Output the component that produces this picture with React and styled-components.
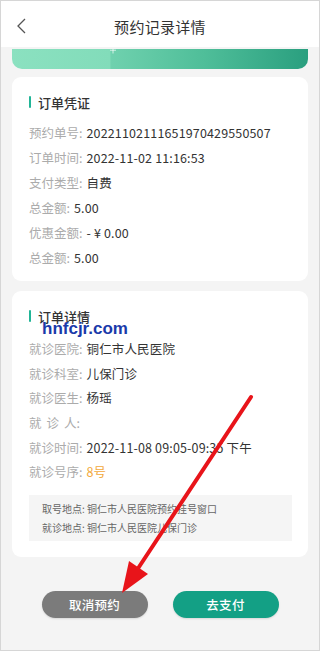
import React from "react";
import styled, { createGlobalStyle } from "styled-components";

const Global = createGlobalStyle`
  html, body { margin: 0; padding: 0; }
  body {
    font-family: "Noto Sans CJK SC", "Noto Sans", sans-serif;
    background: #f4f4f4;
  }
  * { box-sizing: border-box; }
`;

const Page = styled.div`
  position: relative;
  width: 320px;
  height: 651px;
  overflow: hidden;
  background: #f4f4f4;
  border: 1px solid #d6d6d6;
  display: flex;
  flex-direction: column;
`;

const Header = styled.header`
  height: 46px;
  flex: none;
  background: #fff;
  display: grid;
  grid-template-columns: 44px 1fr 44px;
  align-items: center;
`;

const Back = styled.button`
  border: none;
  background: none;
  padding: 0 0 0 15px;
  height: 46px;
  display: flex;
  align-items: center;
  cursor: pointer;
  svg {
    margin-top: 4px;
  }
`;

const Title = styled.h1`
  margin: 0;
  padding-top: 4px;
  text-align: center;
  font-size: 15px;
  font-weight: 400;
  color: #333;
  letter-spacing: 0.3px;
`;

const Banner = styled.div`
  flex: none;
  margin: 2px 11px 0;
  height: 20px;
  border-radius: 0 0 10px 10px;
  background: linear-gradient(
    90deg,
    #8be1c0 0%,
    #82dcba 33%,
    #6fd1ae 33.5%,
    #4fbe99 65%,
    #2a9f7f 100%
  );
  display: flex;
  padding-left: 97px;
`;

const Card = styled.section`
  position: relative;
  flex: none;
  margin: ${(p) => p.$mt}px 11px 0;
  padding: 15px 16px ${(p) => p.$pb}px 17px;
  background: #fff;
  border-radius: 9px;
`;

const CardTitle = styled.div`
  display: flex;
  align-items: center;
  gap: 7px;
  height: 20px;
  font-size: 13px;
  font-weight: 500;
  color: #333;
  margin-bottom: ${(p) => p.$mb}px;
  &::before {
    content: "";
    width: 2px;
    height: 12px;
    background: #22b597;
    border-radius: 1px;
  }
`;

const Row = styled.div`
  display: flex;
  align-items: center;
  height: ${(p) => p.$h}px;
  font-size: 12.5px;
  white-space: nowrap;
`;

const Label = styled.span`
  color: #ababab;
`;

const Spread = styled.span`
  letter-spacing: 5px;
`;

const Value = styled.span`
  color: ${(p) => (p.$accent ? "#f2a93b" : "#333")};
  margin-left: 4px;
  letter-spacing: 0.15px;
`;

const Info = styled.div`
  margin-top: 11px;
  background: #f5f5f5;
  padding: 4px 13px;
  font-size: 10px;
  line-height: 19px;
  color: #666;
  white-space: nowrap;
`;

const Watermark = styled.div`
  position: absolute;
  left: 30px;
  top: 28px;
  font-family: "Liberation Sans", Arial, sans-serif;
  font-weight: 700;
  font-size: 17px;
  line-height: 20px;
  color: #1a3aaa;
  text-shadow: 0 0 1px #fff;
  pointer-events: none;
`;

const Actions = styled.div`
  flex: none;
  margin-top: 34px;
  display: flex;
  justify-content: center;
  gap: 25px;
`;

const Btn = styled.button`
  width: 106px;
  height: 27px;
  border: none;
  border-radius: 14px;
  background: ${(p) => (p.$primary ? "#13a085" : "#7b7b7b")};
  color: #fff;
  font-family: "Noto Sans CJK SC", "Noto Sans", sans-serif;
  font-size: 12.5px;
  font-weight: 500;
  letter-spacing: 0.3px;
  box-shadow: 0 1px 2px rgba(0, 0, 0, 0.12);
`;

const ArrowLayer = styled.svg`
  position: absolute;
  left: 0;
  top: 0;
  pointer-events: none;
`;

const order = [
  ["预约单号", "20221102111651970429550507"],
  ["订单时间", "2022-11-02 11:16:53"],
  ["支付类型", "自费"],
  ["总金额", "5.00"],
  ["优惠金额", "- ¥ 0.00"],
  ["总金额", "5.00"],
];

export default function App() {
  return (
    <>
      <Global />
      <Page>
        <Header>
          <Back aria-label="返回">
            <svg width="10" height="16" viewBox="0 0 10 16">
              <polyline
                points="9,1 2,8 9,15"
                fill="none"
                stroke="#555"
                strokeWidth="1.3"
              />
            </svg>
          </Back>
          <Title>预约记录详情</Title>
          <span />
        </Header>

        <Banner>
          <svg width="8" height="5" viewBox="0 0 8 5">
            <path d="M4 0V4.5M1 1.2H7" stroke="#fff" strokeOpacity="0.7" strokeWidth="1" />
          </svg>
        </Banner>

        <Card $mt={8} $pb={11}>
          <CardTitle $mb={8}>订单凭证</CardTitle>
          {order.map(([k, v], i) => (
            <Row key={i} $h={25}>
              <Label>{k}:</Label>
              <Value>{v}</Value>
            </Row>
          ))}
        </Card>

        <Card $mt={10} $pb={16}>
          <CardTitle $mb={10.5}>订单详情</CardTitle>
          <Watermark>hnfcjr.com</Watermark>
          <Row $h={24.6}>
            <Label>就诊医院:</Label>
            <Value>铜仁市人民医院</Value>
          </Row>
          <Row $h={24.6}>
            <Label>就诊科室:</Label>
            <Value>儿保门诊</Value>
          </Row>
          <Row $h={24.6}>
            <Label>就诊医生:</Label>
            <Value>杨瑶</Value>
          </Row>
          <Row $h={24.6}>
            <Label>
              <Spread>就诊</Spread>人:
            </Label>
            <Value />
          </Row>
          <Row $h={24.6}>
            <Label>就诊时间:</Label>
            <Value>2022-11-08 09:05-09:35 下午</Value>
          </Row>
          <Row $h={24.6}>
            <Label>就诊号序:</Label>
            <Value $accent>8号</Value>
          </Row>
          <Info>
            <div>取号地点: 铜仁市人民医院预约挂号窗口</div>
            <div>就诊地点: 铜仁市人民医院儿保门诊</div>
          </Info>
        </Card>

        <Actions>
          <Btn>取消预约</Btn>
          <Btn $primary>去支付</Btn>
        </Actions>

        <ArrowLayer width="320" height="651" viewBox="0 0 320 651">
          <line
            x1="250"
            y1="396"
            x2="136"
            y2="569"
            stroke="#e8141a"
            strokeWidth="4"
            strokeLinecap="round"
          />
          <polygon points="121,592 147,573 128,560" fill="#e8141a" />
        </ArrowLayer>
      </Page>
    </>
  );
}
